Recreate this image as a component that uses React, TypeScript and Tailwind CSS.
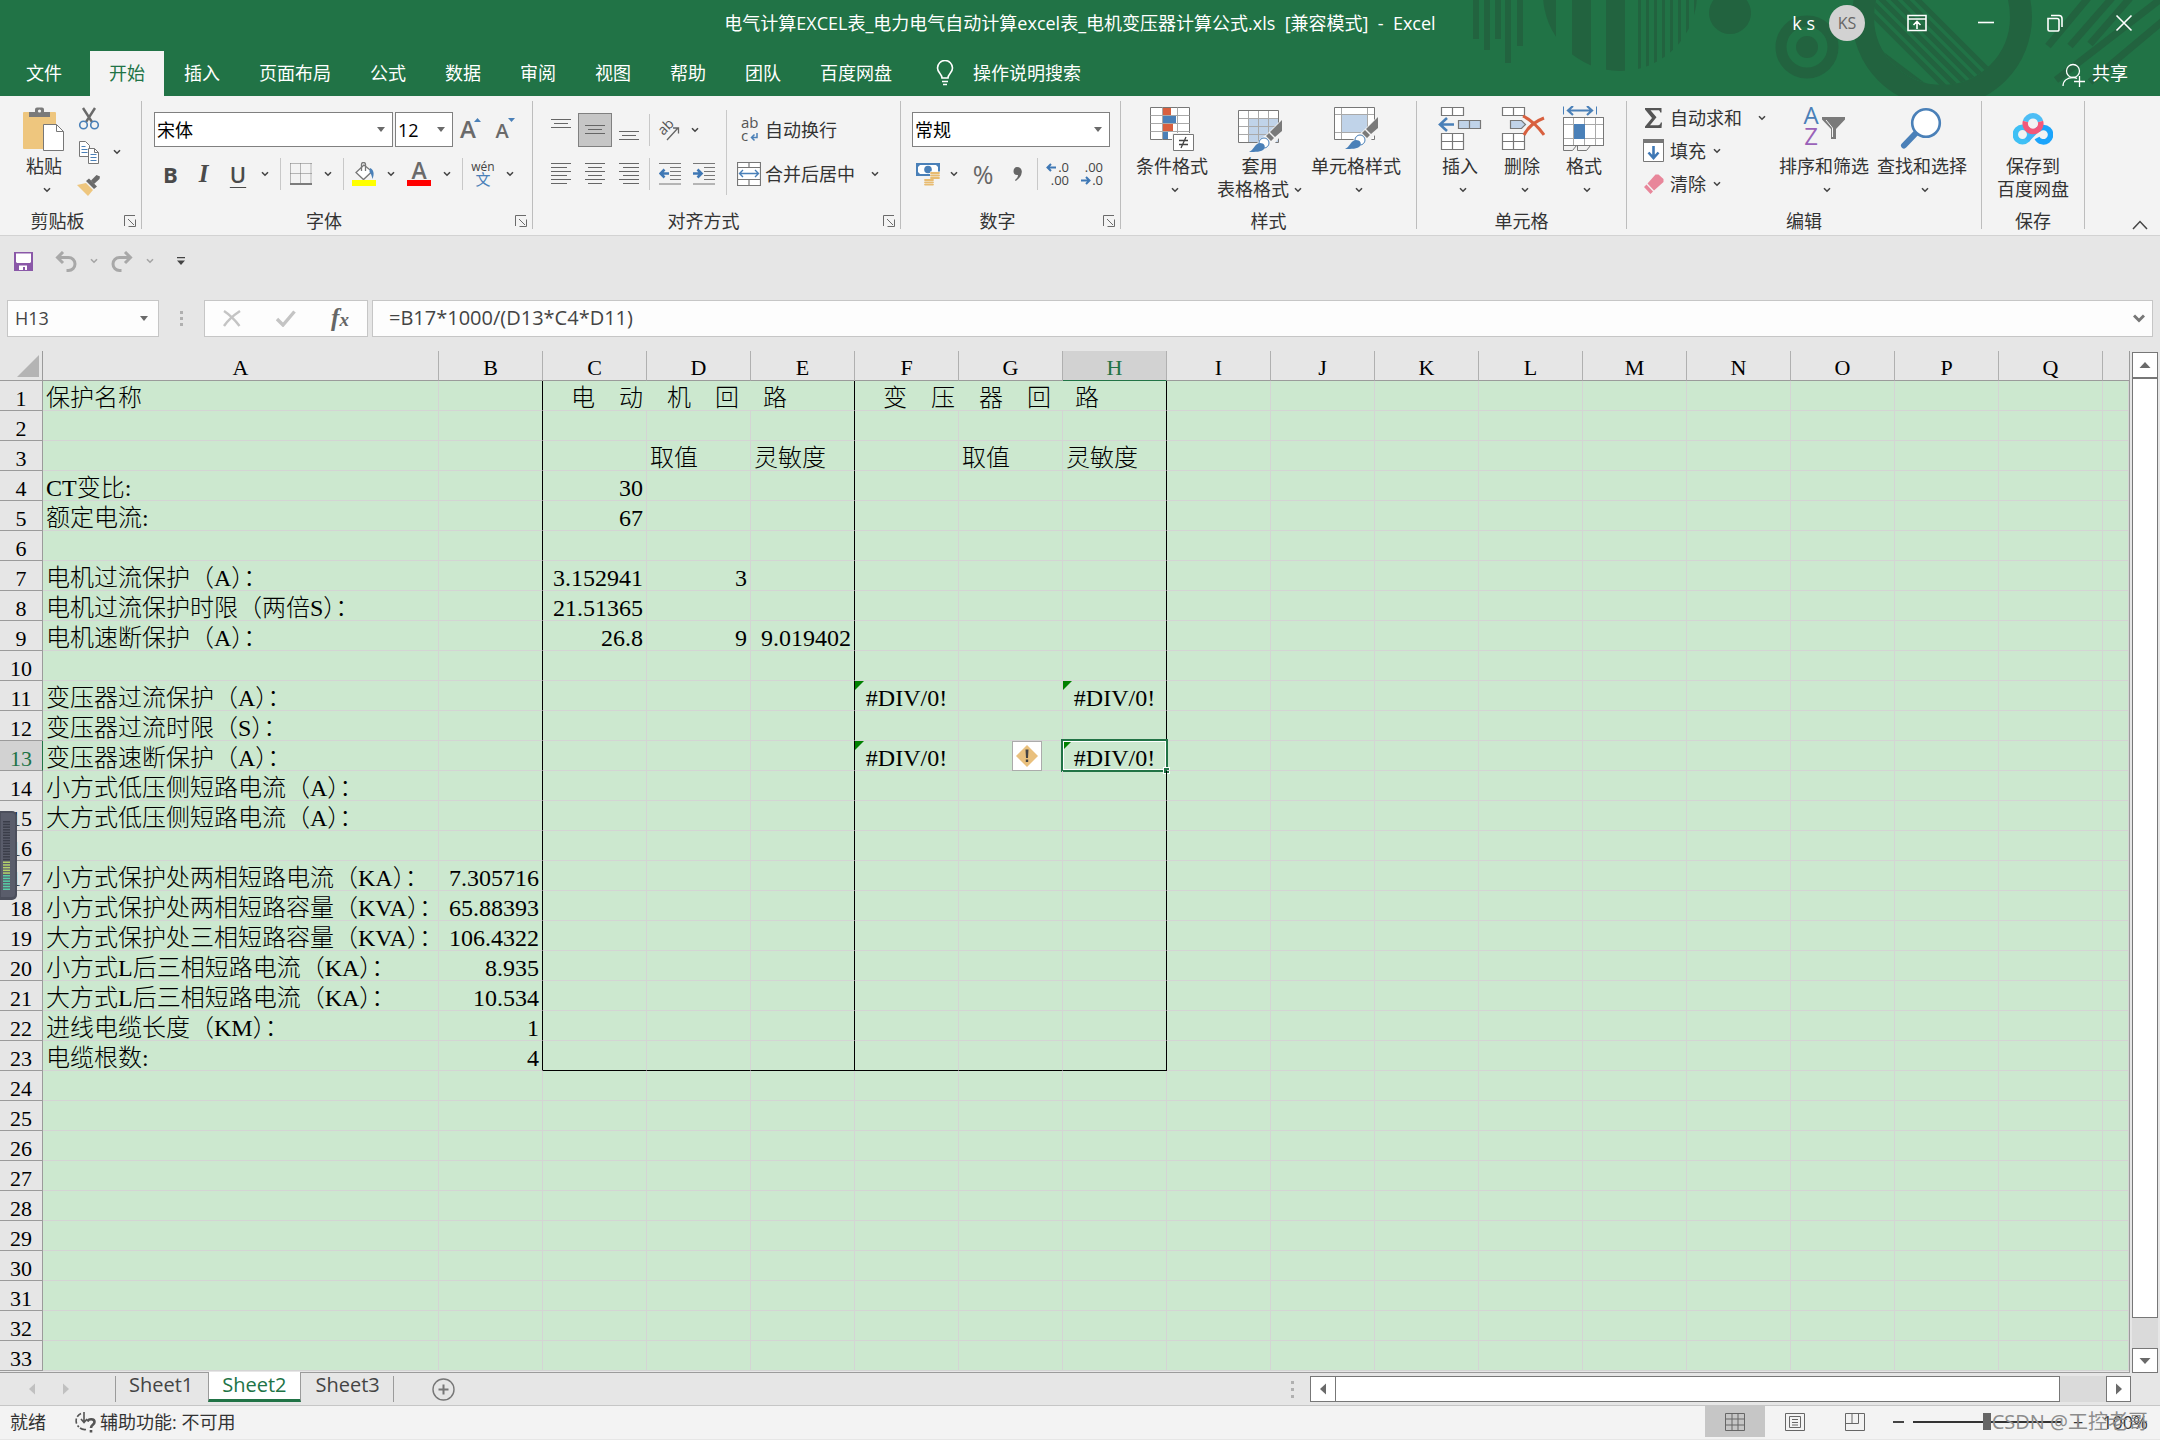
import type { ReactNode } from 'react';
import clsx from 'clsx';

const COLUMNS = ['A', 'B', 'C', 'D', 'E', 'F', 'G', 'H', 'I', 'J', 'K', 'L', 'M', 'N', 'O', 'P', 'Q', ''];
const ROW_COUNT = 33;
const ACTIVE = { col: 'H', row: 13 };

type Align = 'left' | 'right' | 'center';

interface Cell {
  text: string;
  align?: Align;
  span?: number;
  error?: boolean;
}

const num = (text: string): Cell => ({ text, align: 'right' });
const err = (): Cell => ({ text: '#DIV/0!', align: 'center', error: true });

const CELLS: Record<string, Cell> = {
  A1: { text: '保护名称' },
  C1: { text: '电　动　机　回　路', span: 3 },
  F1: { text: '变　压　器　回　路', span: 3 },
  D3: { text: '取值' },
  E3: { text: '灵敏度' },
  G3: { text: '取值' },
  H3: { text: '灵敏度' },
  A4: { text: 'CT变比:' },
  C4: num('30'),
  A5: { text: '额定电流:' },
  C5: num('67'),
  A7: { text: '电机过流保护（A）：' },
  C7: num('3.152941'),
  D7: num('3'),
  A8: { text: '电机过流保护时限（两倍S）：' },
  C8: num('21.51365'),
  A9: { text: '电机速断保护（A）：' },
  C9: num('26.8'),
  D9: num('9'),
  E9: num('9.019402'),
  A11: { text: '变压器过流保护（A）：' },
  F11: err(),
  H11: err(),
  A12: { text: '变压器过流时限（S）：' },
  A13: { text: '变压器速断保护（A）：' },
  F13: err(),
  H13: err(),
  A14: { text: '小方式低压侧短路电流（A）：' },
  A15: { text: '大方式低压侧短路电流（A）：' },
  A17: { text: '小方式保护处两相短路电流（KA）：' },
  B17: num('7.305716'),
  A18: { text: '小方式保护处两相短路容量（KVA）：' },
  B18: num('65.88393'),
  A19: { text: '大方式保护处三相短路容量（KVA）：' },
  B19: num('106.4322'),
  A20: { text: '小方式L后三相短路电流（KA）：' },
  B20: num('8.935'),
  A21: { text: '大方式L后三相短路电流（KA）：' },
  B21: num('10.534'),
  A22: { text: '进线电缆长度（KM）：' },
  B22: num('1'),
  A23: { text: '电缆根数:' },
  B23: num('4'),
};

/* ---------- shared bits ---------- */

function Chevron({ className = 'text-[#444]' }: { className?: string }) {
  return (
    <svg className={clsx('shrink-0', className)} width="8" height="6" viewBox="0 0 8 6" fill="none" stroke="currentColor" strokeWidth="1.6">
      <path d="M1 1.2l3 3 3-3" />
    </svg>
  );
}

function Triangle({ dir, className = 'text-[#6a6a6a]' }: { dir: 'up' | 'down' | 'left' | 'right'; className?: string }) {
  const d = {
    up: 'M6 3l5.5 6h-11z',
    down: 'M6 9L.5 3h11z',
    left: 'M3 6l6-5.5v11z',
    right: 'M9 6L3 .5v11z',
  }[dir];
  return (
    <svg className={className} width="12" height="12" viewBox="0 0 12 12" fill="currentColor">
      <path d={d} />
    </svg>
  );
}

function Sep() {
  return <div className="ml-[6px] mr-[2px] h-8 w-px shrink-0 bg-[#c8c8c8]" />;
}

function DropButton({ label, className = 'w-[18px]' }: { label: string; className?: string }) {
  return (
    <button aria-label={label} className={clsx('flex h-[34px] shrink-0 items-center justify-center', className)}>
      <Chevron />
    </button>
  );
}

function IconButton({ label, className = 'w-[34px]', children }: { label: string; className?: string; children: ReactNode }) {
  return (
    <button aria-label={label} className={clsx('flex h-[34px] shrink-0 items-center justify-center', className)}>
      {children}
    </button>
  );
}

function SelectBox({ label, value, className }: { label: string; value: string; className: string }) {
  return (
    <div className={clsx('relative h-[35px] shrink-0 border border-[#808080] bg-white', className)}>
      <select aria-label={label} className="h-full w-full appearance-none bg-transparent pl-[2px] outline-none">
        <option>{value}</option>
      </select>
      <svg className="pointer-events-none absolute right-[7px] top-[14px]" width="8" height="5" viewBox="0 0 8 5" fill="#6a6a6a">
        <path d="M0 0h8L4 5z" />
      </svg>
    </div>
  );
}

function Group({ label, launcher, className, children }: { label: string; launcher?: boolean; className: string; children: ReactNode }) {
  return (
    <section className={clsx('flex h-32 shrink-0 flex-col border-r border-[#bdbdbd]', className)}>
      <div className="flex flex-1 items-start">{children}</div>
      <div className="flex h-4 items-center">
        <span className="flex-1 text-center leading-4 text-[#333]">{label}</span>
        {launcher && (
          <button aria-label={`${label}设置`} className="flex w-[26px] justify-center pl-1">
            <svg width="12" height="12" viewBox="0 0 12 12" fill="none" stroke="#6a6a6a">
              <path d="M.5 11V.5H11M4 4l6 6M11.500 4.500v7h-7" />
            </svg>
          </button>
        )}
      </div>
    </section>
  );
}

function BigButton({ icon, lines, className, drop = true }: { icon: ReactNode; lines: [string, string?]; className: string; drop?: boolean }) {
  return (
    <button className={clsx('flex shrink-0 flex-col items-center text-[#333]', className)}>
      <span className="flex h-[54px] items-end pb-[3px]">{icon}</span>
      <span className="whitespace-nowrap leading-[23px]">{lines[0]}</span>
      <span className="flex h-[23px] items-center whitespace-nowrap leading-[23px]">
        {lines[1]}
        {drop && <Chevron className="ml-[5px] text-[#444]" />}
      </span>
    </button>
  );
}

/* ---------- icons ---------- */

function PasteIcon() {
  return (
    <svg width="42" height="46" viewBox="0 0 42 46">
      <rect x="0" y="6" width="33" height="37" rx="1" fill="#eec67e" />
      <path d="M6 11V6h6V3.500a2 2 0 0 1 2-2h5a2 2 0 0 1 2 2V6h6v5z" fill="#7a7a7a" />
      <circle cx="16.500" cy="5" r="1.600" fill="#f3f3f3" />
      <path d="M20.500 18.500h13l7 7v19h-20z" fill="#fff" stroke="#777" />
      <path d="M33.500 18.500v7h7" fill="none" stroke="#777" />
    </svg>
  );
}

function ScissorsIcon() {
  return (
    <svg width="22" height="23" viewBox="0 0 22 23" fill="none">
      <path d="M5 1l9 14M17 1L8 15" stroke="#6a6a6a" strokeWidth="2.400" />
      <circle cx="5.500" cy="18" r="3.800" stroke="#4a80b8" strokeWidth="1.600" />
      <circle cx="16.500" cy="18" r="3.800" stroke="#4a80b8" strokeWidth="1.600" />
    </svg>
  );
}

function CopyIcon() {
  return (
    <svg width="22" height="23" viewBox="0 0 22 23" fill="#fff" stroke="#777">
      <path d="M1.500.5h6l4 4v11h-10z" />
      <path d="M10.500 7.500h6l4 4v11h-10z" />
      <path d="M16.500 7.500v4h4" fill="none" />
      <path d="M3.500 5.500h4M3.500 8.500h6M3.500 11.500h6M12.500 13.500h6M12.500 16.500h6M12.500 19.500h6" stroke="#4a80b8" />
    </svg>
  );
}

function BrushIcon() {
  return (
    <svg width="24" height="22" viewBox="0 0 24 22">
      <path d="M0 10l9-2 7 7-5 6z" fill="#eec67e" />
      <path d="M9 6l3-2.500 8 8-3 2.500z" fill="#6a6a6a" />
      <path d="M14 5.500L19.500 0 23 1.500 22.500 4 17 9z" fill="#6a6a6a" />
    </svg>
  );
}

function BordersIcon() {
  return (
    <svg width="22" height="22" viewBox="0 0 22 22" fill="none" stroke="#777">
      <path d="M.5.5h21M.5 10.500h21M.5.5v20M10.500.5v20M21 .5v20" strokeDasharray="1 1" />
      <path d="M0 21h22" stroke="#555" strokeWidth="1.500" />
    </svg>
  );
}

function FillColorIcon() {
  return (
    <svg width="24" height="24" viewBox="0 0 24 24">
      <path d="M12 3L4 10.500l7.500 7L20 9.500z" fill="#fff" stroke="#777" strokeWidth="1.300" />
      <path d="M9.500 9V2.500a2 2 0 0 1 4 0V9" fill="none" stroke="#777" strokeWidth="1.300" />
      <path d="M18 6c4 2 4.500 6 2.500 11-.8-3-1-5-3-7z" fill="#4a80b8" />
      <rect y="18" width="24" height="6" fill="#ff0" />
    </svg>
  );
}

function FontColorIcon() {
  return (
    <svg className="overflow-visible" width="24" height="24" viewBox="0 0 24 24">
      <text x="12" y="17" textAnchor="middle" fontSize="23" fontWeight="600" fontFamily="Open Sans, sans-serif" fill="#6a6a6a">A</text>
      <rect y="18" width="24" height="6" fill="#f00" />
    </svg>
  );
}

function PhoneticIcon() {
  return (
    <svg className="overflow-visible" width="24" height="26" viewBox="0 0 24 26">
      <text x="12" y="10" textAnchor="middle" fontSize="12" fontFamily="Open Sans, sans-serif" fill="#444">wén</text>
      <text x="12" y="24" textAnchor="middle" fontSize="15" fontFamily="Noto Sans CJK SC, sans-serif" fill="#4a80b8">文</text>
    </svg>
  );
}

function GrowFontIcon({ down }: { down?: boolean }) {
  return (
    <svg className="overflow-visible" width="24" height="26" viewBox="0 0 24 26">
      <text x="8" y="21" textAnchor="middle" fontSize={down ? 20 : 24} fontWeight="600" fontFamily="Open Sans, sans-serif" fill="#6a6a6a">A</text>
      <path d={down ? 'M14 1h7l-3.500 4z' : 'M14 5h7l-3.500-4z'} fill="#4a80b8" />
    </svg>
  );
}

// Horizontal rules for the alignment buttons: [start, length] per line
const LINE_SETS: Record<string, [number, number][]> = {
  left: [[0, 20], [0, 16], [0, 20], [0, 16], [0, 20], [0, 16]],
  center: [[0, 20], [3, 14], [0, 20], [3, 14], [0, 20], [3, 14]],
  right: [[0, 20], [4, 16], [0, 20], [4, 16], [0, 20], [4, 16]],
};

function AlignIcon({ kind }: { kind: 'left' | 'center' | 'right' }) {
  return (
    <svg width="20" height="22" viewBox="0 0 20 22" stroke="#666">
      {LINE_SETS[kind].map(([x, len], i) => (
        <path key={i} d={`M${x} ${i * 4 + 0.5}h${len}`} />
      ))}
    </svg>
  );
}

function VAlignIcon({ kind }: { kind: 'top' | 'middle' | 'bottom' }) {
  const y = { top: 5, middle: 11, bottom: 17 }[kind];
  return (
    <svg width="20" height="32" viewBox="0 0 20 32" stroke="#666">
      <path d={`M0 ${y + 0.5}h20M3 ${y + 4.5}h14M0 ${y + 8.5}h20`} />
    </svg>
  );
}

function IndentIcon({ out }: { out?: boolean }) {
  return (
    <svg width="22" height="22" viewBox="0 0 22 22" fill="none" stroke="#777">
      <path d="M0 .5h22M11 4.500h11M11 8.500h11M11 12.500h11M11 16.500h11M0 21h22" />
      <path d={out ? 'M10 10.500H2M5.500 6.500l-4 4 4 4' : 'M0 10.500h8M4.500 6.500l4 4-4 4'} stroke="#3f78b5" strokeWidth="2.600" />
    </svg>
  );
}

function OrientationIcon() {
  return (
    <svg className="overflow-visible" width="22" height="22" viewBox="0 0 22 22">
      <text x="0" y="13" fontSize="14" fontFamily="Open Sans, sans-serif" fill="#555" transform="rotate(-45 7 10)">ab</text>
      <path d="M8 21L19 9M14 9h5.500v5.500" fill="none" stroke="#666" strokeWidth="1.300" />
    </svg>
  );
}

function WrapIcon() {
  return (
    <svg className="overflow-visible" width="24" height="26" viewBox="0 0 24 26">
      <text x="4" y="11" fontSize="15" fontFamily="Open Sans, sans-serif" fill="#555">ab</text>
      <text x="4" y="24" fontSize="15" fontFamily="Open Sans, sans-serif" fill="#555">c</text>
      <path d="M20 16v4.500h-5M17.500 17.500l-3 3 3 3" fill="none" stroke="#4a80b8" strokeWidth="1.500" />
    </svg>
  );
}

function MergeIcon() {
  return (
    <svg width="24" height="24" viewBox="0 0 24 24" fill="none" stroke="#777">
      <path d="M.5.5h23v23H.5zM.5 5.500h23M.5 17.500h23M12 .5v5M12 17.500v6" fill="#fff" strokeWidth="1.200" />
      <path d="M3 11.500h18M6 8l-3.500 3.500L6 15M18 8l3.500 3.500L18 15" stroke="#4a80b8" strokeWidth="1.400" />
    </svg>
  );
}

function CurrencyIcon() {
  return (
    <svg width="24" height="24" viewBox="0 0 24 24">
      <rect y="1" width="24" height="13" fill="#4a80b8" />
      <path d="M4 3h16l2 2v5l-2 2H4l-2-2V5z" fill="#fff" />
      <circle cx="12" cy="7.500" r="3.800" fill="#4a80b8" />
      <path d="M14 9.500h10v9H14zM8 16h9v7H8z" fill="#f3f3f3" />
      <path d="M15 11h8M15 13.500h8M15 16h8M9 18h8M9 20.300h8M9 22.600h8" stroke="#e8bb70" strokeWidth="1.800" strokeLinecap="round" />
    </svg>
  );
}

function DecimalIcon({ more }: { more?: boolean }) {
  return (
    <svg className="overflow-visible" width="24" height="26" viewBox="0 0 24 26" fontSize="13" fontFamily="Open Sans, sans-serif" fill="#444">
      <text x="23" y="11" textAnchor="end">{more ? '.0' : '.00'}</text>
      <text x="23" y="24" textAnchor="end">{more ? '.00' : '.0'}</text>
      <path d={more ? 'M10 6.500H2M5 3L1.500 6.500 5 10' : 'M1 19.500h8M6 16l3.500 3.500L6 23'} fill="none" stroke="#3f78b5" strokeWidth="2" />
    </svg>
  );
}

function ConditionalIcon() {
  return (
    <svg width="48" height="46" viewBox="0 0 48 46">
      <path d="M2.500 1.500h39v32h-39z" fill="#fff" stroke="#777" />
      <path d="M2.500 9.500h39M2.500 17.500h39M2.500 25.500h39M14.500 1.500v32M29.500 1.500v32" stroke="#a9a9a9" fill="none" />
      <path d="M15 2h8v7h-8zM15 18h10v7H15z" fill="#d8603f" />
      <path d="M15 10h13v7H15zM15 26h5v7h-5z" fill="#4a80b8" />
      <path d="M24 27h23v19H24z" fill="#f3f3f3" />
      <path d="M25.500 28.500h20v16h-20z" fill="#fff" stroke="#777" />
      <path d="M31 34.500h9M31 38.500h9M38 31l-5 11" stroke="#444" strokeWidth="1.300" />
    </svg>
  );
}

function PaintOverlay() {
  return (
    <>
      <path d="M47 12L31 28l-7 5-9 13h14l10-9 8-10z" fill="#f3f3f3" />
      <path d="M46 14v11l-7 6-5-5zM33 27l5 5-3 3-5-5z" fill="#7a7a7a" />
      <circle cx="28" cy="37" r="5" fill="#fff" stroke="#4a80b8" />
      <path d="M13 46c5-2 5-8 11-9 4 0 6 3 4 6-2 3-9 3-15 3z" fill="#4a80b8" />
    </>
  );
}

function TableStyleIcon() {
  return (
    <svg width="48" height="46" viewBox="0 0 48 46">
      <path d="M2.500 4.500h40v32h-40z" fill="#fff" />
      <path d="M12 12h30v24H12z" fill="#c0d3e9" />
      <path d="M2.500 12.500h40M2.500 20.500h40M2.500 28.500h40M12.500 4.500v32M22.500 4.500v32M32.500 4.500v32" stroke="#a9a9a9" fill="none" />
      <path d="M2.500 4.500h40v32h-40z" fill="none" stroke="#777" />
      <PaintOverlay />
    </svg>
  );
}

function CellStyleIcon() {
  return (
    <svg width="48" height="46" viewBox="0 0 48 46">
      <path d="M2.500 1.500h40v32h-40z" fill="#fff" />
      <path d="M10 9h25v17H10z" fill="#c0d3e9" />
      <path d="M2.500 8.500h40M2.500 26.500h40M9.500 1.500v32M35.500 1.500v32" stroke="#a9a9a9" fill="none" />
      <path d="M2.500 1.500h40v32h-40z" fill="none" stroke="#777" />
      <g transform="translate(0 -3)"><PaintOverlay /></g>
    </svg>
  );
}

function InsertCellsIcon() {
  return (
    <svg width="46" height="46" viewBox="0 0 46 46" fill="#fff" stroke="#777" strokeWidth="1.200">
      <path d="M4.500 1.500h22v8h-22zM15.500 1.500v8M4.500 27.500h22v16h-22zM4.500 35.500h22M15.500 27.500v16" />
      <path d="M21.500 14.500h22v8h-22zM32.500 14.500v8" fill="#c0d3e9" />
      <path d="M17 18.500H4M10 12l-7 6.500 7 6.500" fill="none" stroke="#4a80b8" strokeWidth="2.600" />
    </svg>
  );
}

function DeleteCellsIcon() {
  return (
    <svg width="46" height="46" viewBox="0 0 46 46" fill="#fff" stroke="#777" strokeWidth="1.200">
      <path d="M3.500 1.500h22v8h-22zM14.500 1.500v8M3.500 27.500h22v16h-22zM3.500 35.500h22M14.500 27.500v16" />
      <path d="M11.500 14.500h11l4 4-4 4h-11z" fill="#c0d3e9" />
      <path d="M24 10c8 4 16 12 21 19M45 12c-8 3-16 9-20 17" fill="none" stroke="#d8603f" strokeWidth="3" />
    </svg>
  );
}

function FormatCellsIcon() {
  return (
    <svg width="46" height="46" viewBox="0 0 46 46" fill="none" stroke="#777">
      <path d="M2.500.5v8M35.500.5v8" stroke="#4a80b8" />
      <path d="M7 4.500h24M12 0L7 4.500 12 9M26 0l5 4.500L26 9" stroke="#4a80b8" strokeWidth="2.200" />
      <path d="M2.500 39.500h40v-28h-40z" fill="#fff" />
      <path d="M2.500 18.500h40M2.500 32.500h40M12.500 11.500v28M23.500 11.500v28M34.500 11.500v28" stroke="#a9a9a9" />
      <path d="M13 18h11v15H13z" fill="#4a80b8" stroke="none" />
      <path d="M2.500 11.500h40v28h-40zM2.500 39.500v5h9l4-5M16.500 39.500v5h9l4-5" />
    </svg>
  );
}

function SortFilterIcon() {
  return (
    <svg className="overflow-visible" width="46" height="46" viewBox="0 0 46 46" fontFamily="Open Sans, sans-serif" fontSize="24">
      <text x="10" y="18" textAnchor="middle" fill="#4a80b8">A</text>
      <text x="10" y="39" textAnchor="middle" fill="#9a62b8">Z</text>
      <path d="M21 11h23v2.500L35 23v10h-5V23L21 13.500z" fill="#7a7a7a" />
      <path d="M25 14l6.500 8v9" fill="none" stroke="#f3f3f3" />
    </svg>
  );
}

function FindIcon() {
  return (
    <svg width="44" height="46" viewBox="0 0 44 46" stroke="#4a80b8">
      <path d="M16 27L4 39.500" strokeWidth="6" strokeLinecap="round" />
      <circle cx="26" cy="17" r="13.800" fill="#fff" strokeWidth="2.600" />
    </svg>
  );
}

function BaiduIcon() {
  return (
    <svg width="40" height="40" viewBox="0 0 40 40" fill="none" strokeWidth="5.500">
      <path d="M12.500 9.500a7.800 7.800 0 0 1 15 0" stroke="#4dbdf5" />
      <circle cx="9.500" cy="22.500" r="7.200" stroke="#3fc0f5" />
      <path d="M24.500 18.500a7.200 7.200 0 1 1-.5 7.500" stroke="#1ba4fb" />
      <path d="M14 28L25 17" stroke="#3fb4f8" strokeWidth="5" />
      <path d="M12.500 9.500a7.800 7.800 0 1 0 15 0" stroke="#f4587a" />
    </svg>
  );
}

/* ---------- title bar and tabs ---------- */

function TitlePattern() {
  const thin = [238, 246, 254, 262, 270, 278, 286, 294];
  return (
    <svg className="absolute right-0 top-0" width="760" height="96" viewBox="0 0 760 96" fill="#22633f">
      <defs>
        <clipPath id="striped"><circle cx="220" cy="-6" r="77" /></clipPath>
        <clipPath id="inner"><circle cx="542" cy="17" r="68" /></clipPath>
      </defs>
      <path d="M73 0h6v39h-6zM84 0h6v50h-6zM95 0h6v39h-6zM105 0h6v63h-6zM117 0h6v46h-6z" />
      <g clipPath="url(#striped)">
        <path d="M140 0h16v80h-16zM172 0h19v80h-19zM206 0h19v80h-19z" />
        {thin.map((x) => <rect key={x} x={x} width="3" height="80" />)}
      </g>
      <circle cx="330" cy="13" r="21" />
      <circle cx="407" cy="47" r="26" fill="none" stroke="#22633f" strokeWidth="11" />
      <circle cx="407" cy="47" r="11" />
      <circle cx="542" cy="17" r="79" fill="none" stroke="#22633f" strokeWidth="22" />
      <g clipPath="url(#inner)" fill="none" stroke="#22633f" strokeWidth="5">
        <path d="M504-2l90 90M492-2l90 90M480-2l90 90M468-2l90 90M456-2l90 90M516-2l90 90" />
        <path d="M460 40l80 60" strokeWidth="9" />
      </g>
      <path d="M688-2L648 46M712-2L670 46M730-2L690 44M762-2L656 80M764 20L690 82" stroke="#22633f" strokeWidth="7" />
    </svg>
  );
}

function WindowButton({ label, className = 'w-[69px]', children }: { label: string; className?: string; children: ReactNode }) {
  return (
    <button aria-label={label} className={clsx('flex h-full items-center justify-center', className)}>
      <svg width="20" height="20" viewBox="0 0 20 20" fill="none" stroke="#fff" strokeWidth="1.600">{children}</svg>
    </button>
  );
}

const TABS = ['插入', '页面布局', '公式', '数据', '审阅', '视图', '帮助', '团队', '百度网盘'];

function Header() {
  return (
    <header className="relative bg-[#217346] text-white">
      <TitlePattern />
      <div className="relative grid h-[51px] grid-cols-[1fr_auto_1fr]">
        <div />
        <h1 className="whitespace-pre pt-[10px] leading-[26px]">电气计算EXCEL表_电力电气自动计算excel表_电机变压器计算公式.xls  [兼容模式]  -  Excel</h1>
        <div className="flex h-[46px] items-center justify-end pr-[2px]">
          <span className="mr-[14px] whitespace-pre">k s</span>
          <button aria-label="帐户" className="mr-[17px] flex size-9 items-center justify-center rounded-full bg-[#d2d2d2] text-base text-[#666]">KS</button>
          <WindowButton label="功能区显示选项">
            <path d="M1 2.500h18v15H1zM1 6h18M10 16V9M6.500 12L10 8.500l3.500 3.500" />
          </WindowButton>
          <WindowButton label="最小化"><path d="M2 9.500h16" /></WindowButton>
          <WindowButton label="还原">
            <path d="M3 5.500h9a2 2 0 0 1 2 2v9a1.500 1.500 0 0 1-1.500 1.500h-8A1.500 1.500 0 0 1 3 16.500zM6 2.500h8a3 3 0 0 1 3 3V14" />
          </WindowButton>
          <WindowButton label="关闭"><path d="M2.500 2.500l15 15M17.500 2.500l-15 15" /></WindowButton>
        </div>
      </div>
      <nav className="relative flex h-[45px] items-stretch gap-px pl-[7px]">
        <button className="mr-2 px-[19px] pb-[2px]">文件</button>
        <button className="bg-[#f3f3f3] px-[19px] pb-[2px] text-[#217346]">开始</button>
        {TABS.map((tab) => (
          <button key={tab} className="px-[19px] pb-[2px]">{tab}</button>
        ))}
        <button className="ml-6 flex items-center gap-[19px] pb-[2px]">
          <svg width="18" height="26" viewBox="0 0 18 26" fill="none" stroke="#fff" strokeWidth="1.600">
            <path d="M6 18c0-4-4.500-5-4.500-10a7.500 7.500 0 0 1 15 0c0 5-4.500 6-4.500 10zM6 21.500h6M7 24.500h4" />
          </svg>
          操作说明搜索
        </button>
        <button className="ml-auto mr-8 flex items-center gap-[6px] pb-[2px]">
          <svg className="mt-1" width="24" height="24" viewBox="0 0 24 24" fill="none" stroke="#fff" strokeWidth="1.300">
            <circle cx="11" cy="8" r="6.500" />
            <path d="M1 23c0-5 4-8.500 10-8.500 2 0 3 .3 4 1M12 18.500h11M17.500 13v11" />
          </svg>
          共享
        </button>
      </nav>
    </header>
  );
}

/* ---------- ribbon ---------- */

function Ribbon() {
  return (
    <div className="flex h-[140px] border-b border-[#d2d2d2] bg-[#f3f3f3] pt-[5px]">
      <Group label="剪贴板" launcher className="w-[142px]">
        <BigButton icon={<PasteIcon />} lines={['粘贴']} className="w-[72px] pl-4" />
        <div className="flex flex-col pl-[5px]">
          <IconButton label="剪切" className="w-6"><ScissorsIcon /></IconButton>
          <div className="flex">
            <IconButton label="复制" className="w-6"><CopyIcon /></IconButton>
            <DropButton label="复制选项" className="w-8" />
          </div>
          <IconButton label="格式刷" className="w-6"><BrushIcon /></IconButton>
        </div>
      </Group>

      <Group label="字体" launcher className="w-[391px]">
        <div className="flex flex-col gap-[9px] pl-3 pt-[11px]">
          <div className="flex items-center">
            <SelectBox label="字体" value="宋体" className="w-[239px]" />
            <SelectBox label="字号" value="12" className="ml-[2px] w-[58px]" />
            <IconButton label="增大字号" className="ml-[3px] w-8"><GrowFontIcon /></IconButton>
            <IconButton label="减小字号" className="w-9"><GrowFontIcon down /></IconButton>
          </div>
          <div className="flex h-[35px] items-center text-[#4a4a4a]">
            <IconButton label="加粗" className="w-[33px] text-[22px] font-bold">B</IconButton>
            <IconButton label="倾斜" className="w-[33px] font-['Liberation_Serif',serif] text-[25px] font-bold italic">I</IconButton>
            <IconButton label="下划线" className="w-9 text-[22px] font-semibold underline decoration-1 underline-offset-4">U</IconButton>
            <DropButton label="下划线选项" />
            <Sep />
            <IconButton label="边框" className="w-9"><BordersIcon /></IconButton>
            <DropButton label="边框选项" />
            <Sep />
            <IconButton label="填充颜色" className="w-9"><FillColorIcon /></IconButton>
            <DropButton label="填充颜色选项" />
            <IconButton label="字体颜色" className="w-[38px]"><FontColorIcon /></IconButton>
            <DropButton label="字体颜色选项" />
            <Sep />
            <IconButton label="拼音指南" className="w-9"><PhoneticIcon /></IconButton>
            <DropButton label="拼音选项" />
          </div>
        </div>
      </Group>

      <Group label="对齐方式" launcher className="w-[368px]">
        <div className="flex w-[188px] flex-col gap-[9px] pl-[11px] pt-[11px]">
          <div className="flex h-[35px] items-center">
            <IconButton label="顶端对齐"><VAlignIcon kind="top" /></IconButton>
            <IconButton label="垂直居中" className="w-[34px] border border-[#808080] bg-[#c6c6c6]"><VAlignIcon kind="middle" /></IconButton>
            <IconButton label="底端对齐"><VAlignIcon kind="bottom" /></IconButton>
            <div className="mx-[3px] h-8 w-px bg-[#c8c8c8]" />
            <IconButton label="方向"><OrientationIcon /></IconButton>
            <DropButton label="方向选项" className="w-4" />
          </div>
          <div className="flex h-[35px] items-center">
            <IconButton label="左对齐"><AlignIcon kind="left" /></IconButton>
            <IconButton label="居中"><AlignIcon kind="center" /></IconButton>
            <IconButton label="右对齐"><AlignIcon kind="right" /></IconButton>
            <div className="mx-[3px] h-8 w-px bg-[#c8c8c8]" />
            <IconButton label="减少缩进量"><IndentIcon out /></IconButton>
            <IconButton label="增加缩进量"><IndentIcon /></IconButton>
          </div>
        </div>
        <div className="ml-[5px] mt-[9px] h-[85px] w-px bg-[#c8c8c8]" />
        <div className="flex flex-col gap-[9px] pl-[10px] pt-[11px] text-[#333]">
          <button className="flex h-[35px] items-center gap-1"><WrapIcon />自动换行</button>
          <button className="flex h-[35px] items-center gap-1"><MergeIcon />合并后居中<Chevron className="ml-3 text-[#444]" /></button>
        </div>
      </Group>

      <Group label="数字" launcher className="w-[220px]">
        <div className="flex flex-col gap-[9px] pl-[11px] pt-[11px]">
          <SelectBox label="数字格式" value="常规" className="w-[198px]" />
          <div className="flex h-[35px] items-center text-[#666]">
            <IconButton label="会计数字格式" className="w-8"><CurrencyIcon /></IconButton>
            <DropButton label="会计格式选项" className="w-5" />
            <IconButton label="百分比样式" className="w-[38px] text-[25px]">%</IconButton>
            <IconButton label="千位分隔样式" className="w-8">
              <svg width="10" height="14" viewBox="0 0 10 14" fill="#666">
                <path d="M4 0c3 0 5 2 4.800 5C8.500 9 6 12 2.500 14L2 13c2-1.500 3-3.200 3-5C2 8.500.5 6.500.5 4.200.5 2 2 0 4 0z" />
              </svg>
            </IconButton>
            <div className="mx-[3px] h-8 w-px bg-[#c8c8c8]" />
            <IconButton label="增加小数位数"><DecimalIcon more /></IconButton>
            <IconButton label="减少小数位数"><DecimalIcon /></IconButton>
          </div>
        </div>
      </Group>

      <Group label="样式" className="w-[296px]">
        <BigButton icon={<ConditionalIcon />} lines={['条件格式']} className="ml-[9px] w-[84px]" />
        <BigButton icon={<TableStyleIcon />} lines={['套用', '表格格式']} className="w-[91px]" />
        <BigButton icon={<CellStyleIcon />} lines={['单元格样式']} className="w-[102px]" />
      </Group>

      <Group label="单元格" className="w-[210px]">
        <BigButton icon={<InsertCellsIcon />} lines={['插入']} className="ml-3 w-[62px]" />
        <BigButton icon={<DeleteCellsIcon />} lines={['删除']} className="w-[62px]" />
        <BigButton icon={<FormatCellsIcon />} lines={['格式']} className="w-[62px]" />
      </Group>

      <Group label="编辑" className="w-[355px]">
        <div className="flex w-[148px] flex-col pl-4 text-[#333]">
          <button className="flex h-[33px] items-center gap-[5px]">
            <svg width="22" height="20" viewBox="0 0 22 20" fill="#555">
              <path d="M2 0h16.500v4.500h-1.300c-.3-1.600-.8-2.200-2.200-2.200H7.500l6 7-6.500 7.900h8c1.700 0 2.300-.7 2.800-2.700h1.200L18.500 20H2v-1.500l7-8.500-7-8.500z" />
            </svg>
            自动求和<Chevron className="ml-[11px] text-[#444]" />
          </button>
          <button className="flex h-[33px] items-center gap-[5px]">
            <svg width="22" height="24" viewBox="0 0 22 24">
              <path d="M.5 1.500h20v21H.5z" fill="#fff" stroke="#777" />
              <path d="M0 0h21v4H0z" fill="#777" />
              <path d="M10.500 7v12M5.500 13.500l5 5.500 5-5.500" fill="none" stroke="#3f78b5" strokeWidth="2.600" />
            </svg>
            填充<Chevron className="ml-[2px] text-[#444]" />
          </button>
          <button className="flex h-[33px] items-center gap-[5px]">
            <svg width="22" height="20" viewBox="0 0 22 20" fill="#e8869a">
              <path d="M12.500.5h3l5 4.500v3L11 16.500 4.500 9.500zM3.500 10.500l6.500 7L7.500 20 1 13z" />
            </svg>
            清除<Chevron className="ml-[2px] text-[#444]" />
          </button>
        </div>
        <BigButton icon={<SortFilterIcon />} lines={['排序和筛选']} className="w-[98px]" />
        <BigButton icon={<FindIcon />} lines={['查找和选择']} className="w-[98px]" />
      </Group>

      <Group label="保存" className="w-[103px]">
        <BigButton icon={<BaiduIcon />} lines={['保存到', '百度网盘']} drop={false} className="w-full" />
      </Group>

      <button aria-label="折叠功能区" className="ml-auto mr-[11px] self-end pb-[4px]">
        <svg width="18" height="12" viewBox="0 0 18 12" fill="none" stroke="#444" strokeWidth="1.500">
          <path d="M2 10l7-7.500L16 10" />
        </svg>
      </button>
    </div>
  );
}

function QuickAccess() {
  return (
    <div className="flex h-[50px] items-center pl-[14px] text-[#a8a8a8]">
      <button aria-label="保存">
        <svg width="19" height="19" viewBox="0 0 19 19">
          <path d="M0 0h19v19H0z" fill="#8a58a8" />
          <path d="M2 1.500h15V10l-1 1H3l-1-1zM5 13.500h8V18h-2v-3H9v3H5z" fill="#fff" />
        </svg>
      </button>
      <button aria-label="撤消" className="ml-[22px]">
        <svg width="22" height="21" viewBox="0 0 22 21" fill="none" stroke="#a8a8a8" strokeWidth="3">
          <path d="M8 1L2.500 6.500 8 12M3 6.500h10.500a6.500 6.500 0 0 1 0 13h-2" />
        </svg>
      </button>
      <DropButton label="撤消选项" className="w-[34px] opacity-40" />
      <button aria-label="恢复">
        <svg width="22" height="21" viewBox="0 0 22 21" fill="none" stroke="#a8a8a8" strokeWidth="3">
          <path d="M14 1l5.500 5.500L14 12M19 6.500H8.500a6.500 6.500 0 0 0 0 13h2" />
        </svg>
      </button>
      <DropButton label="恢复选项" className="w-[34px] opacity-40" />
      <button aria-label="自定义快速访问工具栏" className="ml-[10px]">
        <svg width="8" height="8" viewBox="0 0 8 8" fill="#444">
          <path d="M0 0h8v1.300H0zM0 3.500h8L4 8z" />
        </svg>
      </button>
    </div>
  );
}

function FormulaBar() {
  return (
    <div className="mb-[14px] mt-[14px] flex h-[37px] pl-[7px] pr-[7px] text-[#444]">
      <div className="flex w-[152px] items-center border border-[#c6c6c6] bg-[#fdfdfd] pr-[10px]">
        <input aria-label="名称框" defaultValue="H13" className="min-w-0 flex-1 bg-transparent pb-px pl-[7px] outline-none" />
        <button aria-label="名称列表">
          <svg width="8" height="5" viewBox="0 0 8 5" fill="#6a6a6a"><path d="M0 0h8L4 5z" /></svg>
        </button>
      </div>
      <div className="flex w-[45px] flex-col items-center justify-center gap-[3px]">
        <i className="size-[3px] bg-[#b0b0b0]" />
        <i className="size-[3px] bg-[#b0b0b0]" />
        <i className="size-[3px] bg-[#b0b0b0]" />
      </div>
      <div className="flex w-[164px] items-center border border-[#c6c6c6] bg-[#fdfdfd]">
        <IconButton label="取消" className="w-[54px]">
          <svg width="18" height="17" viewBox="0 0 18 17" fill="none" stroke="#c4c4c4" strokeWidth="2.400">
            <path d="M1 1c6 4 11 9 15.500 15M17 1C11 5 5 10 1 16" />
          </svg>
        </IconButton>
        <IconButton label="输入" className="w-[54px]">
          <svg width="20" height="17" viewBox="0 0 20 17" fill="none" stroke="#c4c4c4" strokeWidth="3.400">
            <path d="M1 9l6 6L18.500 1.500" />
          </svg>
        </IconButton>
        <IconButton label="插入函数" className="w-[54px] pb-[2px] font-['Liberation_Serif',serif] font-bold italic text-[#666]">
          <span className="text-[25px] leading-[26px]">f</span>
          <span className="pt-1 text-[19px] leading-[22px]">x</span>
        </IconButton>
      </div>
      <div className="ml-1 flex flex-1 items-center border border-[#c6c6c6] bg-[#fdfdfd]">
        <input aria-label="编辑栏" defaultValue="=B17*1000/(D13*C4*D11)" className="min-w-0 flex-1 bg-transparent pb-px pl-4 text-[20px] outline-none" />
        <button aria-label="展开编辑栏" className="pr-[7px]">
          <svg width="12" height="9" viewBox="0 0 12 9" fill="none" stroke="#777" strokeWidth="3"><path d="M1 1.500l5 5 5-5" /></svg>
        </button>
      </div>
    </div>
  );
}

/* ---------- worksheet ---------- */

function SheetCell({ col, row }: { col: string; row: number }) {
  const cell = CELLS[`${col}${row}`];
  const active = col === ACTIVE.col && row === ACTIVE.row;
  const lastCol = cell?.span ? String.fromCharCode(col.charCodeAt(0) + cell.span - 1) : col;
  const inBlock = row <= 23;
  const blackRight = inBlock && ['B', 'E', 'H'].includes(lastCol);
  const blackBottom = row === 23 && col >= 'C' && col <= 'H';
  return (
    <td
      colSpan={cell?.span}
      className={clsx(
        'relative h-[30px] whitespace-nowrap border-b border-r px-[3px] align-bottom leading-[24px]',
        blackRight ? 'border-r-black' : 'border-r-[#d4d4d4]',
        blackBottom ? 'border-b-black' : 'border-b-[#d4d4d4]',
        cell?.align === 'right' && 'text-right',
        cell?.align === 'center' && 'text-center',
        cell?.span && 'pl-7',
      )}
    >
      {cell?.text}
      {cell?.error && (
        <svg className="absolute left-0 top-0" width="9" height="9" viewBox="0 0 9 9" fill="#008000"><path d="M0 0h9L0 9z" /></svg>
      )}
      {active && (
        <div className="absolute -inset-[2px] border-2 border-[#217346] outline-1 -outline-offset-[3px] outline-white">
          <span className="absolute -bottom-[4px] -right-[4px] size-[7px] border border-white bg-[#217346]" />
        </div>
      )}
      {col === 'G' && row === 13 && (
        <button aria-label="错误检查选项" className="absolute right-[20px] top-0 flex size-[30px] items-center justify-center border border-[#ababab] bg-white">
          <svg width="22" height="22" viewBox="0 0 22 22">
            <path d="M11 0l11 11-11 11L0 11z" fill="#e9c07d" />
            <path d="M9.500 4.500h3L12 13h-2zM9.800 14.500h2.400V17H9.800z" fill="#444" />
          </svg>
        </button>
      )}
    </td>
  );
}

function Worksheet() {
  const rows = Array.from({ length: ROW_COUNT }, (_, i) => i + 1);
  const covered = (col: string, row: number) => row === 1 && ['D', 'E', 'G', 'H'].includes(col);
  return (
    <div className="min-w-0 flex-1 border-b border-r border-[#9b9b9b] pb-px">
      <table className="w-full table-fixed border-separate border-spacing-0 bg-[#cce8cf] font-['Liberation_Serif','Noto_Sans_CJK_SC',serif] text-[24px] font-light text-black">
        <colgroup>
          <col className="w-[43px]" />
          <col className="w-[396px]" />
          {COLUMNS.slice(1, 17).map((c) => <col key={c} className="w-[104px]" />)}
          <col />
        </colgroup>
        <thead>
          <tr className="text-[22px] leading-[22px]">
            <th className="h-[30px] border-b border-r border-[#9b9b9b] bg-[#e6e6e6] p-0 align-bottom">
              <svg className="mb-[3px] ml-[17px]" width="22" height="22" viewBox="0 0 22 22" fill="#b4b4b4"><path d="M22 0v22H0z" /></svg>
            </th>
            {COLUMNS.map((c, i) => (
              <th
                key={i}
                className={clsx(
                  'h-[30px] border-b p-0 pb-px align-bottom font-normal',
                  i < 17 && 'border-r border-r-[#b0b0b0]',
                  c === ACTIVE.col ? 'border-b-[#217346] bg-[#d2d2d2] text-[#217346]' : 'border-b-[#9b9b9b] bg-[#e6e6e6]',
                )}
              >
                {c}
              </th>
            ))}
          </tr>
        </thead>
        <tbody>
          {rows.map((row) => (
            <tr key={row}>
              <th
                className={clsx(
                  'h-[30px] border-b border-r p-0 align-bottom text-[22px] font-normal leading-[22px]',
                  row === ACTIVE.row
                    ? 'border-b-[#9b9b9b] border-r-[#217346] bg-[#d2d2d2] text-[#217346]'
                    : 'border-[#9b9b9b] bg-[#e6e6e6]',
                )}
              >
                {row}
              </th>
              {COLUMNS.map((col) => !covered(col, row) && <SheetCell key={col} col={col} row={row} />)}
            </tr>
          ))}
        </tbody>
      </table>
    </div>
  );
}

function VerticalScroll() {
  return (
    <div className="ml-[2px] mr-[2px] flex w-[26px] flex-col bg-[#dadada]">
      <div className="h-px bg-[#e6e6e6]" />
      <button aria-label="向上滚动" className="flex h-[26px] items-center justify-center border border-[#777] bg-white"><Triangle dir="up" /></button>
      <div className="h-[940px] border border-[#777] bg-white" />
      <button aria-label="向下滚动" className="mt-auto flex h-[25px] items-center justify-center border border-[#777] bg-white"><Triangle dir="down" /></button>
    </div>
  );
}

// Floating level meter docked to the left edge of the window
function LevelMeter() {
  const ticks = Array.from({ length: 26 }, (_, i) => i);
  return (
    <svg className="absolute left-0 top-[811px]" width="17" height="89" viewBox="0 0 17 89">
      <path d="M0 0h12a5 5 0 0 1 5 5v79a5 5 0 0 1-5 5H0z" fill="#4c4f5c" />
      <path d="M1 2h11a3 3 0 0 1 3 3v78a3 3 0 0 1-3 3H1z" fill="#5a5d6b" />
      {ticks.map((i) => (
        <rect key={i} x="3" y={10 + i * 2.7} width="7" height="1.500" fill={i < 15 ? '#3a3d49' : i < 20 ? '#b5d46a' : '#56d0a8'} />
      ))}
    </svg>
  );
}

function SheetTabs() {
  return (
    <div className="flex h-8 bg-[#e6e6e6] text-[20px] leading-[18px] text-[#444]">
      <div className="flex w-[115px] items-center gap-[22px] pl-[26px]">
        <button aria-label="上一个工作表"><Triangle dir="left" className="text-[#c0c0c0]" /></button>
        <button aria-label="下一个工作表"><Triangle dir="right" className="text-[#c0c0c0]" /></button>
      </div>
      <button className="my-[3px] flex items-start border-l border-[#9b9b9b] pl-[13px] pr-[15px]">Sheet1</button>
      <button className="-mt-px mb-[3px] flex items-start border-x border-b-[3px] border-x-[#9b9b9b] border-b-[#217346] bg-white px-[13px] pt-1 text-[#217346]">Sheet2</button>
      <button className="my-[3px] flex items-start border-r border-[#9b9b9b] pl-[15px] pr-[13px]">Sheet3</button>
      <button aria-label="新工作表" className="ml-[38px] flex items-center">
        <svg width="23" height="23" viewBox="0 0 23 23" fill="none" stroke="#777" strokeWidth="1.400">
          <circle cx="11.500" cy="11.500" r="10.500" />
          <path d="M6.500 11.500h10M11.500 6.500v10" strokeWidth="2" />
        </svg>
      </button>
      <div className="ml-auto flex w-[840px] py-[3px]">
        <div className="mr-4 flex flex-col justify-center gap-[4px]">
          <i className="size-[3px] bg-[#b0b0b0]" />
          <i className="size-[3px] bg-[#b0b0b0]" />
          <i className="size-[3px] bg-[#b0b0b0]" />
        </div>
        <button aria-label="向左滚动" className="flex w-[26px] items-center justify-center border border-[#777] bg-white"><Triangle dir="left" /></button>
        <div className="-ml-px w-[725px] border border-[#777] bg-white" />
        <div className="flex-1 bg-[#dadada]" />
        <button aria-label="向右滚动" className="flex w-[25px] items-center justify-center border border-[#777] bg-white"><Triangle dir="right" /></button>
      </div>
      <div className="w-[29px]" />
    </div>
  );
}

function StatusBar() {
  return (
    <footer className="flex h-[34px] items-center border-t border-[#c6c6c6] bg-[#f3f3f3] pb-[2px] pl-[10px] text-[#333]">
      <span>就绪</span>
      <button className="ml-[29px] flex items-center gap-[3px]">
        <svg width="22" height="22" viewBox="0 0 22 22" fill="none" stroke="#555" strokeWidth="1.600">
          <path d="M6 2.500a8 8 0 0 0-2 13.500" strokeDasharray="5 2" />
          <path d="M9 1v10M6 8l3 3.500L12 8M5 17a8 8 0 0 0 6 1.500" />
          <path d="M12.500 10.500c1-3 7-3 7 .5 0 3-3.500 2.500-3.500 6M16 19v2.500" strokeWidth="2.600" />
        </svg>
        辅助功能: 不可用
      </button>
      <div className="ml-auto flex h-full items-center">
        <IconButton label="普通" className="h-full w-[60px] bg-[#c6c6c6]">
          <svg width="20" height="20" viewBox="0 0 20 20" fill="none" stroke="#666"><path d="M.5 1.500h19v17H.5zM.5 7h19M.5 13h19M7 1.500v17M13 1.500v17" /></svg>
        </IconButton>
        <IconButton label="页面布局" className="w-[60px]">
          <svg width="20" height="20" viewBox="0 0 20 20" fill="none" stroke="#666"><path d="M.5 1.500h19v17H.5zM4.500 4.500h11v11h-11zM7 7.500h6M7 10.500h6M7 13h6" /></svg>
        </IconButton>
        <IconButton label="分页预览" className="w-[60px]">
          <svg width="20" height="20" viewBox="0 0 20 20" fill="none" stroke="#666"><path d="M.5 1.500h19v17H.5zM.5 11.500h13v-10M7 1.500v10" /></svg>
        </IconButton>
        <button aria-label="缩小" className="ml-2 h-[2px] w-[11px] bg-[#444]" />
        <input
          type="range"
          aria-label="显示比例"
          defaultValue={50}
          className="ml-[9px] h-[2px] w-[148px] appearance-none bg-[#333] [&::-webkit-slider-thumb]:h-[17px] [&::-webkit-slider-thumb]:w-2 [&::-webkit-slider-thumb]:appearance-none [&::-webkit-slider-thumb]:bg-[#666]"
        />
        <button aria-label="放大" className="ml-3 leading-5">+</button>
        <button className="ml-[19px] mr-3">100%</button>
      </div>
    </footer>
  );
}

export default function App() {
  return (
    <div className="relative flex min-h-screen flex-col overflow-hidden bg-[#e6e6e6] font-['Open_Sans','Noto_Sans_CJK_SC',sans-serif] text-[18px] leading-6">
      <Header />
      <Ribbon />
      <QuickAccess />
      <FormulaBar />
      <main className="flex">
        <Worksheet />
        <VerticalScroll />
      </main>
      <SheetTabs />
      <StatusBar />
      <LevelMeter />
      <div className="pointer-events-none absolute bottom-[6px] right-[12px] text-[20px] text-[#8c8c8c]">CSDN @工控老哥</div>
    </div>
  );
}
